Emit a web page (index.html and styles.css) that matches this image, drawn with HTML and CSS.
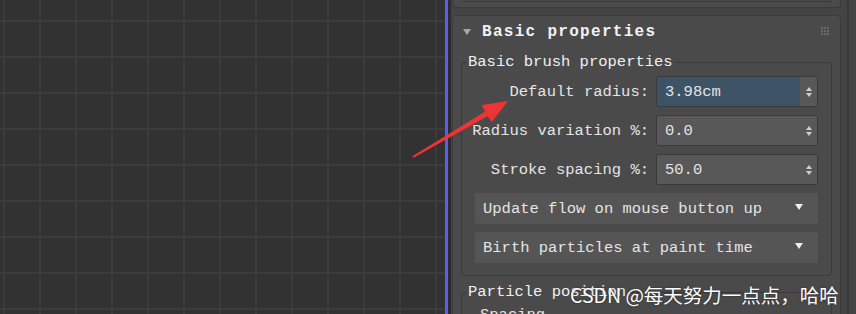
FILE: index.html
```html
<!DOCTYPE html>
<html lang="en">
<head>
    <meta charset="UTF-8">
    <title>Brush properties</title>
    <link rel="stylesheet" href="styles.css">
</head>
<body>
    <div class="viewport"></div>
    <div class="divider"></div>
    <div class="gutter"></div>
    <div class="panel">
        <div class="rollouts">
            <div class="rollout prev">
                <div class="prev-box"></div>
            </div>
            <div class="rollout">
                <div class="rollout-head">
                    <span class="caret"></span>
                    <span class="rollout-title">Basic properties</span>
                    <span class="grip">
                        <i></i><i></i><i></i><i></i><i></i><i></i><i></i><i></i><i></i>
                    </span>
                </div>
                <fieldset class="group">
                    <legend>Basic brush properties</legend>
                    <div class="fields">
                        <label>Default radius:</label>
                        <div class="spin active"><span class="val">3.98cm</span><span class="arrows"><b class="up"></b><b class="down"></b></span></div>
                        <label>Radius variation %:</label>
                        <div class="spin"><span class="val">0.0</span><span class="arrows"><b class="up"></b><b class="down"></b></span></div>
                        <label>Stroke spacing %:</label>
                        <div class="spin"><span class="val">50.0</span><span class="arrows"><b class="up"></b><b class="down"></b></span></div>
                        <div class="dropdown"><span>Update flow on mouse button up</span><b class="down"></b></div>
                        <div class="dropdown"><span>Birth particles at paint time</span><b class="down"></b></div>
                    </div>
                </fieldset>
                <fieldset class="group">
                    <legend>Particle position</legend>
                    <div class="sub">Spacing</div>
                </fieldset>
            </div>
        </div>
        <div class="scroll"><div class="track"></div></div>
    </div>

    <svg class="arrow" width="856" height="314" viewBox="0 0 856 314">
        <polygon points="412.4,156.3 485.2,111.5 481.4,105.1 508,101 491.6,122.3 487.8,115.9 413.6,157.8" fill="#ee3535"/>
    </svg>
    <div class="watermark">CSDN @每天努力一点点，哈哈</div>
</body>
</html>
```

FILE: styles.css
```css
body {
    margin: 0;
    width: 856px;
    height: 314px;
    overflow: hidden;
    display: flex;
    position: relative;
    font-family: "Liberation Mono", "DejaVu Sans Mono", monospace;
    font-size: 15.5px;
    color: #e4e4e4;
    background-color: #323232;
}
.viewport {
    width: 445px;
    flex-shrink: 0;
    background-color: #323232;
    background-image:
        linear-gradient(90deg, #3b3b3b 2px, transparent 2px),
        linear-gradient(#3b3b3b 2px, transparent 2px);
    background-size: 36px 36px;
    background-position: 3px 20px;
}
.divider {
    width: 3px;
    background-color: #5c5cf2;
}
.gutter {
    width: 3px;
    background-color: #2c2c2c;
}
.panel {
    flex: 1;
    display: flex;
    background-color: #444;
}
.rollouts {
    width: 389px;
    padding-left: 1px;
    display: flex;
    flex-direction: column;
    gap: 7px;
}
.rollout {
    background-color: #4a4a4a;
    border: 1px solid #3b3b3b;
    border-radius: 4px;
}
.rollout.prev {
    height: 7px;
    border-top: none;
    border-radius: 0 0 4px 4px;
    flex-shrink: 0;
}
.prev-box {
    margin: 0 8px 0 9px;
    height: 1px;
    border: 1px solid #3b3b3b;
    border-top: none;
    border-radius: 0 0 3px 3px;
}
.rollout-head {
    height: 31px;
    margin-bottom: 7px;
    display: flex;
    align-items: center;
    padding: 0 11px 0 10px;
}
.caret {
    width: 0;
    height: 0;
    border-left: 4px solid transparent;
    border-right: 4px solid transparent;
    border-top: 6px solid #a8a8a8;
    margin-right: 11px;
}
.rollout-title {
    flex: 1;
    font-weight: bold;
    font-size: 16px;
    letter-spacing: 1.3px;
    color: #f2f2f2;
}
.grip {
    display: grid;
    grid-template-columns: repeat(3, 2px);
    gap: 1px;
    margin-top: -2px;
}
.grip i {
    width: 2px;
    height: 2px;
    background-color: #6a6a6a;
}
.group {
    min-width: 0;
    margin: 0 8px;
    padding: 6px 13px 12px;
    border: 1px solid #393939;
    border-radius: 4px;
}
.group + .group {
    margin-top: 8px;
}
.group legend {
    padding: 0 2px;
    margin-left: -9px;
    line-height: 16px;
    color: #f0f0f0;
}
.fields {
    display: grid;
    grid-template-columns: minmax(0, 1fr) 162px;
    grid-auto-rows: 31px;
    column-gap: 7px;
    row-gap: 8px;
}
.fields label {
    justify-self: end;
    align-self: center;
    white-space: nowrap;
}
.spin {
    display: flex;
    background-color: #585858;
    border: 1px solid #3a3a3a;
    border-radius: 2px;
}
.spin .val {
    flex: 1;
    display: flex;
    align-items: center;
    padding-left: 8px;
}
.spin.active .val {
    background-color: #3e5466;
}
.arrows {
    width: 17px;
    display: flex;
    flex-direction: column;
    justify-content: center;
    align-items: center;
    gap: 2px;
}
.up, .down {
    width: 0;
    height: 0;
    border-left: 3.5px solid transparent;
    border-right: 3.5px solid transparent;
}
.up {
    border-bottom: 4px solid #cfcfcf;
}
.down {
    border-top: 4px solid #cfcfcf;
}
.dropdown {
    grid-column: 1 / 3;
    display: flex;
    align-items: center;
    justify-content: space-between;
    padding: 0 15px 0 8px;
    background-color: #555;
    border-radius: 2px;
}
.dropdown .down {
    border-left-width: 4.5px;
    border-right-width: 4.5px;
    border-top-width: 6px;
    border-top-color: #eee;
    margin-top: -3px;
}
.sub {
    padding-left: 5px;
    height: 30px;
}
.scroll {
    flex: 1;
    padding-left: 6px;
}
.track {
    width: 2px;
    height: 100%;
    background-color: #383838;
}
.arrow {
    position: absolute;
    left: 0;
    top: 0;
}
.watermark {
    position: absolute;
    left: 570px;
    top: 280px;
    font-family: "Noto Sans CJK SC", "Noto Sans", sans-serif;
    font-size: 19.5px;
    color: #fff;
    text-shadow: 0 0 2px rgba(0, 0, 0, 0.5);
    white-space: nowrap;
}
```
